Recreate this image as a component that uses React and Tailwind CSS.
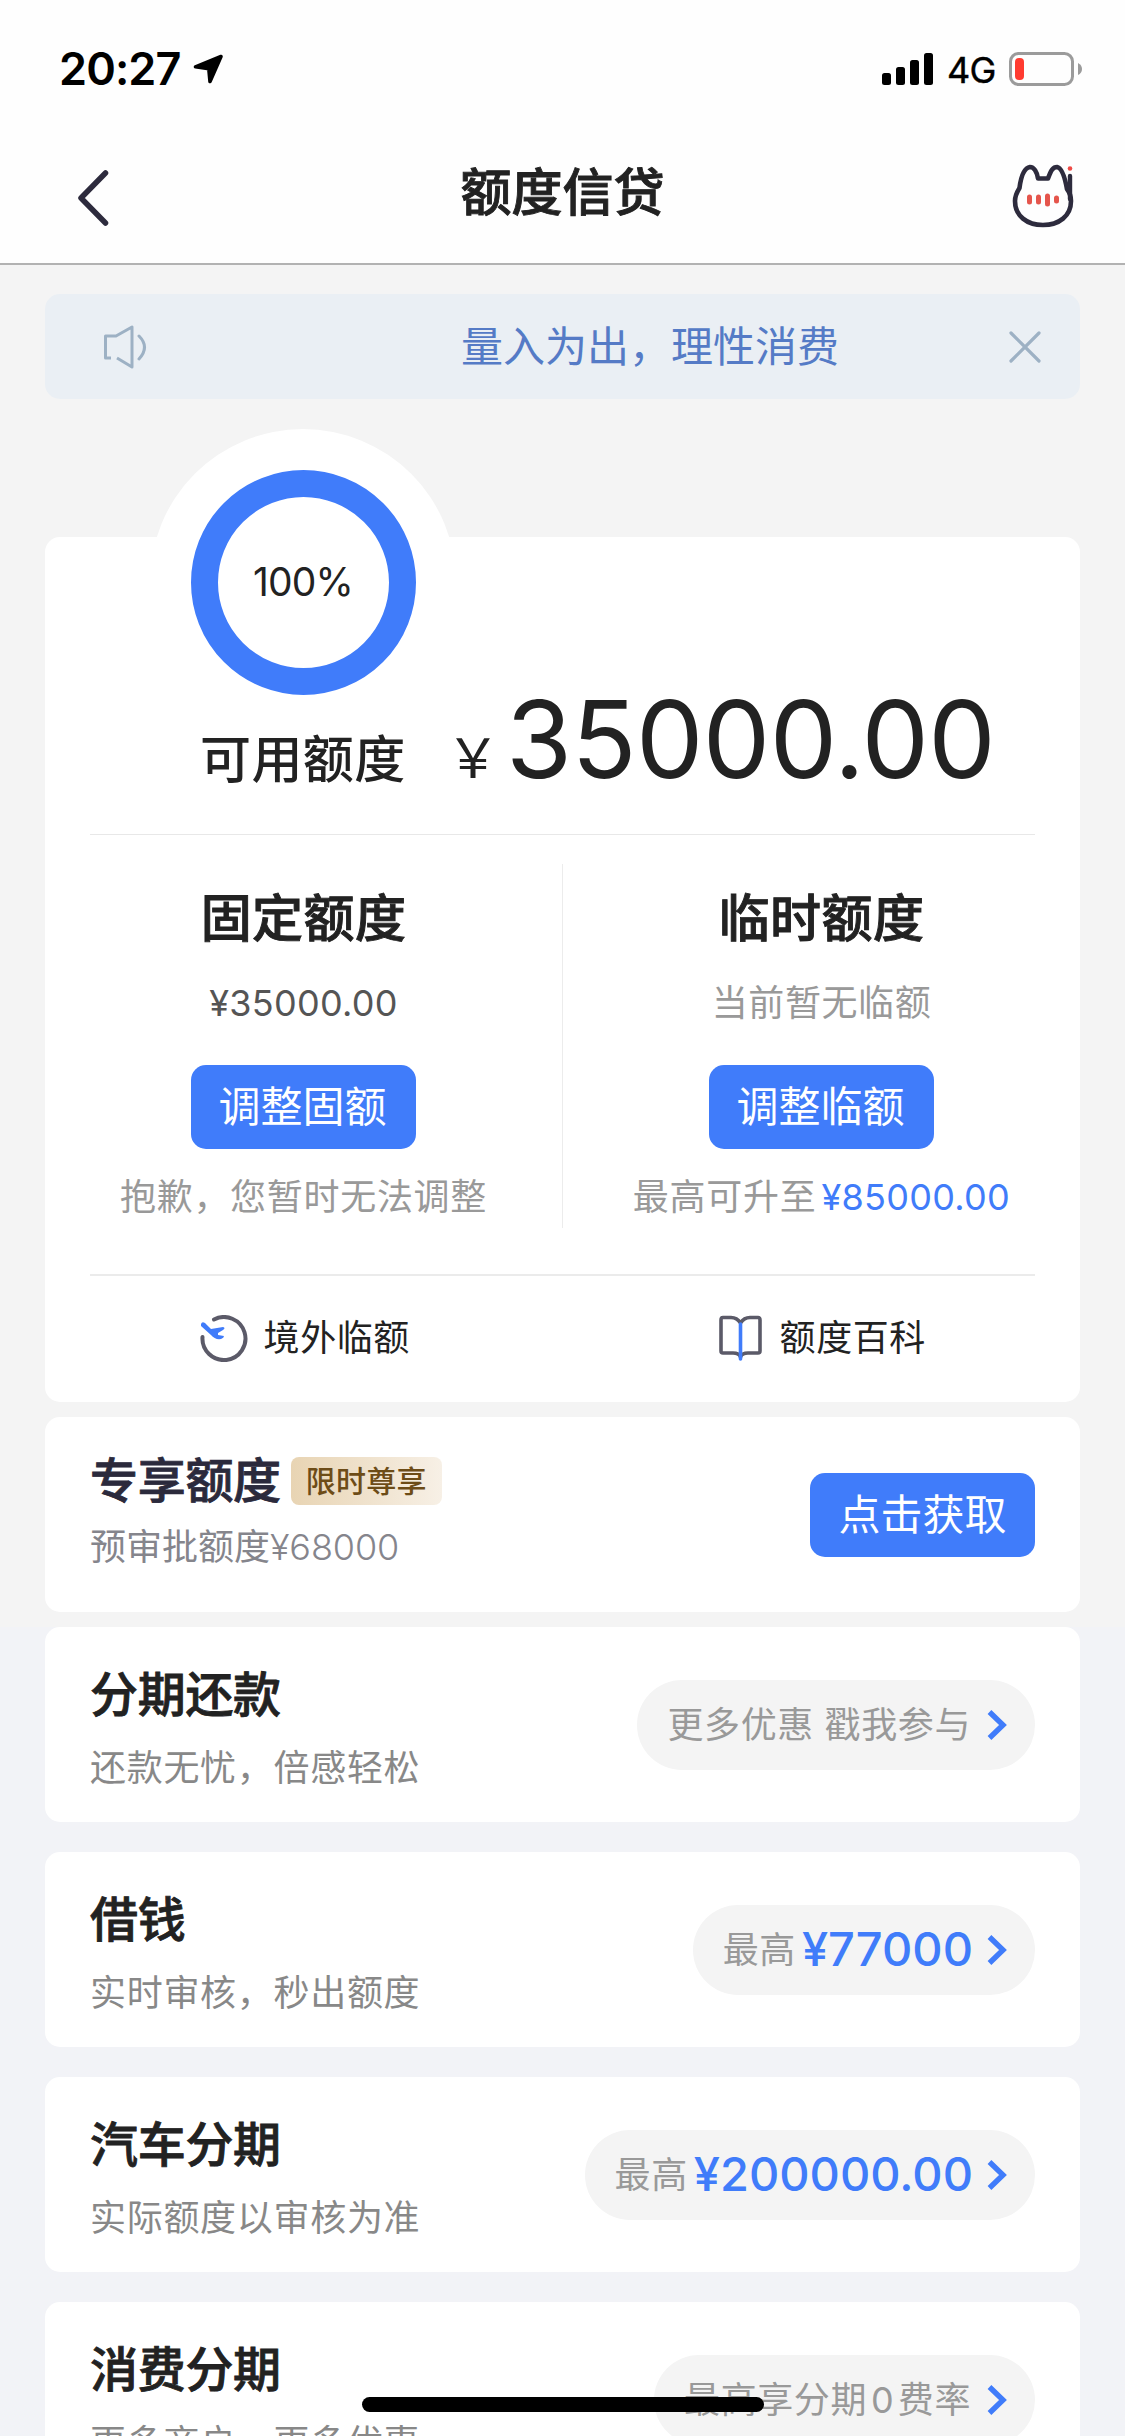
import { useState } from 'react';

// Productos que se listan debajo de la tarjeta principal
const productos = [
  { id: 'fenqi', titulo: '分期还款', detalle: '还款无忧，倍感轻松', etiqueta: '更多优惠 戳我参与' },
  { id: 'jieqian', titulo: '借钱', detalle: '实时审核，秒出额度', etiqueta: '最高', monto: '¥77000' },
  { id: 'qiche', titulo: '汽车分期', detalle: '实际额度以审核为准', etiqueta: '最高', monto: '¥200000.00' },
  { id: 'xiaofei', titulo: '消费分期', detalle: '更多商户，更多优惠', etiqueta: '最高享分期', cero: true },
];

function BarraEstado() {
  return (
    <div className="flex h-[132px] items-start justify-between pl-[59px] pr-[43px] pt-[44px] text-black">
      <div className="flex items-center gap-[12px]">
        <span className="text-[45px] font-semibold leading-[50px] tracking-[-0.9px]">20:27</span>
        <svg className="h-[31px] w-[31px]" viewBox="0 0 31 31">
          <path d="M2.500 12.800 L28 2.500 L17 27.500 L15.800 14.800 Z" fill="#000" stroke="#000" strokeWidth="3.600" strokeLinejoin="round" />
        </svg>
      </div>
      <div className="flex h-[50px] items-center">
        <svg className="h-[32px] w-[51px]" viewBox="0 0 51 32">
          <rect x="0" y="20" width="9" height="12" rx="2.5" />
          <rect x="14" y="14" width="9" height="18" rx="2.5" />
          <rect x="28" y="7" width="9" height="25" rx="2.5" />
          <rect x="42" y="0" width="9" height="32" rx="2.5" />
        </svg>
        <span className="ml-[14px] w-[62px] pt-[2px] text-[36px] leading-[50px] tracking-[-0.8px] [-webkit-text-stroke:0.4px]">4G</span>
        <svg className="h-[34px] w-[73px]" viewBox="0 0 73 34">
          <rect x="1.5" y="1.5" width="62" height="31" rx="8" fill="none" stroke="#9b9b9b" strokeWidth="3" />
          <rect x="6" y="6" width="9" height="22" rx="4" fill="#ff3b30" />
          <path d="M69 11 Q73 13 73 17 Q73 21 69 23 Z" fill="#9b9b9b" />
        </svg>
      </div>
    </div>
  );
}

function IconoGato() {
  return (
    <svg className="mb-[3px] h-[64px] w-[62px]" viewBox="0 0 62 64" fill="none" strokeLinecap="round" strokeLinejoin="round">
      <path
        d="M26 14.500 L36 14.500 C39 6 41 3 45 3 C50 4 53 14 55 25 C58 29 59 33 59 37 C59 52 47 61 31 61 C15 61 3 52 3 37 C3 32 5 28 7.500 24 C9 12 12 4 18 3 C22 3 25 8 26 14.500 Z"
        stroke="#2d2b3d"
        strokeWidth="4.6"
      />
      <path d="M58 12 V35" stroke="#2d2b3d" strokeWidth="4.4" />
      <path d="M17.500 33 V38 M26.500 33 V38 M35.500 32 V40 M44.500 34 V37" stroke="#e5554c" strokeWidth="5" />
      <circle cx="58" cy="4.500" r="2.300" fill="#ef4b45" />
    </svg>
  );
}

function Encabezado() {
  return (
    <header className="h-[265px] border-b-2 border-[#b2b2b2] bg-[#fefefe]">
      <BarraEstado />
      <div className="flex h-[131px] items-center justify-between pl-[77px] pr-[51px]">
        <svg className="h-[56px] w-[36px]" viewBox="0 0 36 56" fill="none">
          <path d="M28.500 3 L4 28 L28.500 53" stroke="#2d2b3d" strokeWidth="5.500" strokeLinecap="round" strokeLinejoin="round" />
        </svg>
        <h1 className="pb-[10px] text-[51px] font-medium leading-[60px] text-[#222] [-webkit-text-stroke:0.9px]">额度信贷</h1>
        <IconoGato />
      </div>
    </header>
  );
}

function Aviso({ onCerrar }) {
  return (
    <div className="flex h-[105px] items-center rounded-[15px] bg-[#eaeff4] pl-[58px] pr-[38px]">
      <svg className="h-[44px] w-[46px]" viewBox="0 0 46 44" fill="none" stroke="#9db1c4" strokeWidth="3" strokeLinejoin="round">
        <path d="M8 33 H2.500 V11 H13 L29 2 V42 L14 33" />
        <path d="M36 11 Q47 22 36 34" strokeLinecap="round" />
      </svg>
      <span className="ml-[312px] flex-1 text-[42px] leading-[60px] text-[#557bc6]">量入为出，理性消费</span>
      <button onClick={onCerrar}>
        <svg className="h-[34px] w-[34px]" viewBox="0 0 34 34" stroke="#9db1c4" strokeWidth="3.200" strokeLinecap="round">
          <path d="M3 3 L31 31 M31 3 L3 31" />
        </svg>
      </button>
    </div>
  );
}

function Columna({ titulo, valor, boton, children }) {
  return (
    <div className="flex flex-1 flex-col items-center pt-[54px]">
      <h2 className="text-[51px] font-medium leading-[60px] tracking-[0.4px] text-[#222] [-webkit-text-stroke:0.9px]">{titulo}</h2>
      <div className="mt-[29px] flex h-[50px] leading-[50px]">{valor}</div>
      <button className="mt-[37px] h-[84px] w-[225px] rounded-[15px] bg-[#407cfa] pr-[2px] text-[42px] leading-[84px] text-white">
        {boton}
      </button>
      <div className="mt-[23px] flex text-[36px] leading-[50px] tracking-[0.7px] text-[#999]">{children}</div>
    </div>
  );
}

function TarjetaLimite() {
  return (
    <section className="flex h-[865px] flex-col rounded-[15px] bg-white">
      {/* El anillo sobresale por encima de la tarjeta */}
      <div className="-mt-[108px] -mb-[36px] ml-[105px] flex size-[306px] shrink-0 items-center justify-center rounded-full bg-white">
        <div className="flex size-[225px] items-center justify-center rounded-full border-[27px] border-[#407cfa] text-[39px] tracking-[-0.8px] text-[#222]">
          100%
        </div>
      </div>

      <div className="flex h-[135px] items-baseline pl-[155px] text-[#222]">
        <span className="w-[246px] text-[51px] font-medium leading-[60px] tracking-[0.4px]">可用额度</span>
        <span className="w-[60px] text-[54px] leading-[60px]">￥</span>
        <span className="text-[107px] leading-[80px] tracking-[-0.6px]">35000.00</span>
      </div>

      <div className="mx-[45px] h-px bg-[#e8e8e8]" />

      <div className="flex h-[439px]">
        <Columna
          titulo="固定额度"
          valor={<span className="text-[36px] tracking-[0.3px] text-[#555]">¥35000.00</span>}
          boton="调整固额"
        >
          抱歉，您暂时无法调整
        </Columna>
        <div className="mt-[29px] h-[364px] w-px bg-[#ececec]" />
        <Columna
          titulo="临时额度"
          valor={<span className="text-[36px] tracking-[0.6px] text-[#999]">当前暂无临额</span>}
          boton="调整临额"
        >
          <span>最高可升至</span>
          <span className="ml-[5px] tracking-[0.3px] text-[#407cfa]">¥85000.00</span>
        </Columna>
      </div>

      <div className="mx-[45px] h-[2px] bg-[#ebebeb]" />

      <div className="flex flex-1 pb-[2px] text-[36px] tracking-[0.6px] text-[#222]">
        <div className="flex flex-1 items-center justify-center gap-[16px] pl-[2px]">
          <svg className="h-[47px] w-[48px]" viewBox="0 0 48 47" fill="none">
            <path d="M14 4.500 A21.500 21.500 0 1 1 2.500 22" stroke="#5b5a68" strokeWidth="4" strokeLinecap="round" />
            <path d="M1 9 Q2 6 5 8 L11 14 L23 12 Q26 13 23 15 L18 18 L18 20 L24 21 Q24 23 21 24 Q15 25 11 20 L1 11 Z" fill="#407cfa" />
          </svg>
          <span>境外临额</span>
        </div>
        <div className="flex flex-1 items-center justify-center gap-[18px] pl-[2px]">
          <svg className="h-[46px] w-[43px]" viewBox="0 0 43 46" fill="none" strokeLinecap="round" strokeLinejoin="round">
            <path
              d="M21.500 8 Q18 2.500 12 2.500 H4 Q2 2.500 2 5 V36 Q2 38 4 38 H14 Q20 38 21.500 42 Q23 38 29 38 H39 Q41 38 41 36 V5 Q41 2.500 39 2.500 H31 Q25 2.500 21.500 8 Z"
              stroke="#5b5a68"
              strokeWidth="3.600"
            />
            <path d="M21.500 9 V44" stroke="#407cfa" strokeWidth="3.600" />
          </svg>
          <span>额度百科</span>
        </div>
      </div>
    </section>
  );
}

function TarjetaExclusiva() {
  return (
    <section className="flex h-[195px] items-center justify-between rounded-[15px] bg-white px-[45px]">
      <div className="-mt-[6px]">
        <div className="flex items-center">
          <h3 className="text-[48px] font-medium leading-[60px] text-[#2b2a3c] [-webkit-text-stroke:0.8px] -tracking-[0.3px]">专享额度</h3>
          <span className="ml-[10px] h-[48px] rounded-[8px] bg-linear-to-r from-[#e8d4b3] to-[#f7f0e6] px-[15px] text-[30px] font-medium leading-[48px] text-[#6d4c17] tracking-[0.2px]">
            限时尊享
          </span>
        </div>
        <p className="mt-[11px] text-[36px] leading-[50px] text-[#85858c]">
          预审批额度<span className="font-light -tracking-[0.1px]">¥68000</span>
        </p>
      </div>
      <button className="h-[84px] w-[225px] rounded-[15px] bg-[#407cfa] text-[42px] leading-[84px] text-white">点击获取</button>
    </section>
  );
}

function Producto({ item }) {
  return (
    <section className="flex h-[195px] shrink-0 items-center justify-between rounded-[15px] bg-white px-[45px]">
      <div className="pt-[9px]">
        <h3 className="text-[48px] font-medium leading-[60px] text-[#222] [-webkit-text-stroke:0.8px] -tracking-[0.3px]">{item.titulo}</h3>
        <p className="mt-[18px] text-[36px] leading-[50px] tracking-[0.7px] text-[#888]">{item.detalle}</p>
      </div>
      <div className="flex h-[90px] items-center rounded-full bg-[#f4f4f4] pl-[30px] pr-[27px] text-[36px] text-[#999]">
        <span className="tracking-[0.6px]">{item.etiqueta}</span>
        {item.cero && <span className="px-[4px]">0</span>}
        {item.cero && <span className="tracking-[0.6px]">费率</span>}
        {item.monto && <span className="ml-[6px] -mr-[2px] text-[47px] font-medium text-[#407cfa]">{item.monto}</span>}
        <svg className="ml-[15px] h-[32px] w-[22px]" viewBox="0 0 22 32" fill="none">
          <path d="M3.500 3 L17 16 L3.500 29" stroke="#407cfa" strokeWidth="5.400" />
        </svg>
      </div>
    </section>
  );
}

export default function App() {
  const [avisoVisible, setAvisoVisible] = useState(true);

  return (
    <div
      lang="zh-CN"
      className="relative flex h-[2436px] w-[1125px] flex-col overflow-hidden bg-[#f2f3f7] font-['Inter','Noto_Sans_CJK_SC',sans-serif]"
    >
      <Encabezado />
      <div className="bg-[#f4f4f4] px-[45px] pb-[15px] pt-[29px]">
        <div className="h-[243px]">{avisoVisible && <Aviso onCerrar={() => setAvisoVisible(false)} />}</div>
        <TarjetaLimite />
        <div className="h-[15px]" />
        <TarjetaExclusiva />
      </div>
      <div className="flex flex-col gap-[30px] px-[45px]">
        {productos.map((p) => (
          <Producto key={p.id} item={p} />
        ))}
      </div>
      {/* Indicador de inicio */}
      <div className="absolute bottom-[24px] left-[362px] h-[15px] w-[402px] rounded-full bg-black" />
    </div>
  );
}
